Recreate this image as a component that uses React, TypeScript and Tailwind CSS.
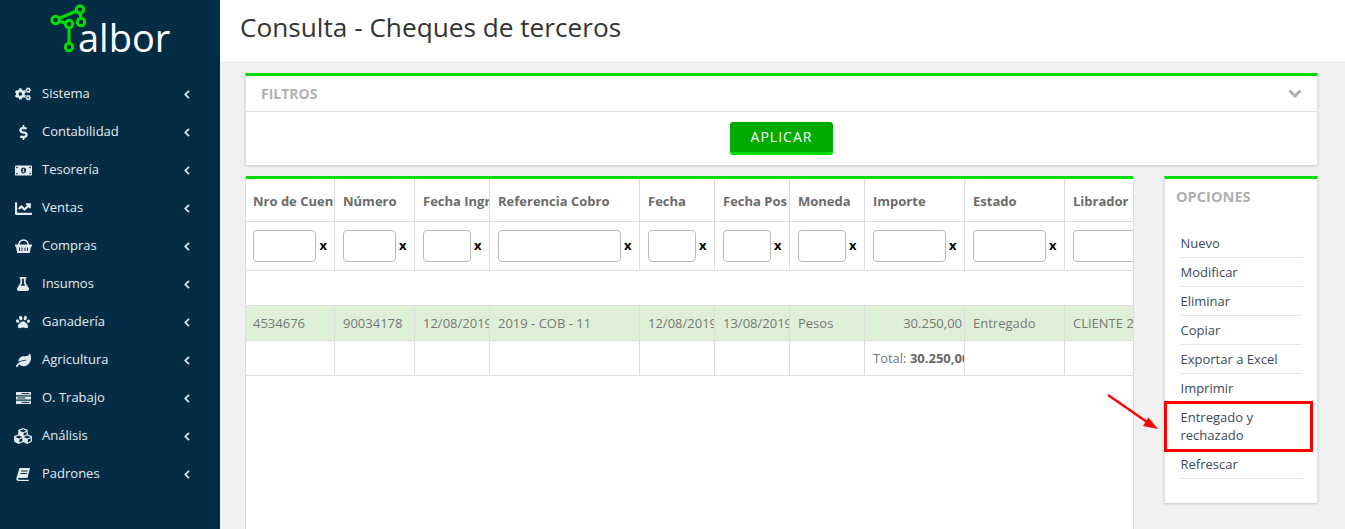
import { FaChartLine, FaCogs, FaCubes, FaDollarSign, FaFlask, FaLeaf, FaMoneyBillAlt, FaPaw } from 'react-icons/fa'

function BasketIcon() {
  return (
    <svg width="17" height="14" viewBox="0 0 17 14">
      <path d="M3.5 6.5C4 2.5 6 1 8.5 1s4.500 1.500 5 5.500" fill="none" stroke="currentColor" strokeWidth="1.5" />
      <path d="M0 5.500h17v2h-1L14.800 14H2.200L1 7.500H0Z" fill="currentColor" />
      <path d="M4.500 8.500v3.500M7 8.500v3.500M10 8.500v3.500M12.500 8.500v3.500" stroke="#052c45" strokeWidth="1" />
    </svg>
  )
}

function BarsIcon() {
  return (
    <svg width="15" height="12" viewBox="0 0 15 12">
      <path d="M0 0h15v3.200H0ZM0 4.400h15v3.200H0ZM0 8.800h15V12H0Z" fill="currentColor" />
      <path d="M5.500 1.600h8M1.500 6h8M5.500 10.400h8" stroke="#052c45" strokeWidth="1" />
    </svg>
  )
}

function BookIcon() {
  return (
    <svg width="14" height="13" viewBox="0 0 14 13">
      <path d="M3.500 0H14L11.500 10H2.800C2.300 10 2 10.500 2.200 11s.6.700 1 .700h9.800L12.500 13H2.500C1 13 0 12 .4 10.300Z" fill="currentColor" />
      <path d="M5 3h6.500M4.500 5.500H11" stroke="#052c45" strokeWidth="1" />
    </svg>
  )
}

const menu = [
  { label: 'Sistema', icon: <FaCogs className="text-[16px]" /> },
  { label: 'Contabilidad', icon: <FaDollarSign className="text-[15px]" /> },
  { label: 'Tesorería', icon: <FaMoneyBillAlt className="text-[17px]" /> },
  { label: 'Ventas', icon: <FaChartLine className="text-[17px]" /> },
  { label: 'Compras', icon: <BasketIcon /> },
  { label: 'Insumos', icon: <FaFlask className="text-[14px]" /> },
  { label: 'Ganadería', icon: <FaPaw className="text-[14px]" /> },
  { label: 'Agricultura', icon: <FaLeaf className="text-[15px]" /> },
  { label: 'O. Trabajo', icon: <BarsIcon /> },
  { label: 'Análisis', icon: <FaCubes className="text-[18px]" /> },
  { label: 'Padrones', icon: <BookIcon /> },
]

const columns = [
  { title: 'Nro de Cuenta', width: 'w-[88px]', input: 'w-[63px]' },
  { title: 'Número', width: 'w-[80px]', input: 'w-[53px]' },
  { title: 'Fecha Ingreso', width: 'w-[75px]', input: 'w-[48px]' },
  { title: 'Referencia Cobro', width: 'w-[150px]', input: 'w-[123px]' },
  { title: 'Fecha', width: 'w-[75px]', input: 'w-[48px]' },
  { title: 'Fecha Pos', width: 'w-[75px]', input: 'w-[48px]' },
  { title: 'Moneda', width: 'w-[75px]', input: 'w-[48px]' },
  { title: 'Importe', width: 'w-[100px]', input: 'w-[73px]' },
  { title: 'Estado', width: 'w-[100px]', input: 'w-[73px]' },
  { title: 'Librador', width: 'w-[100px]', input: 'w-[73px]' },
]

const row = ['4534676', '90034178', '12/08/2019', '2019 - COB - 11', '12/08/2019', '13/08/2019', 'Pesos', '30.250,00', 'Entregado', 'CLIENTE 2']

const options = ['Nuevo', 'Modificar', 'Eliminar', 'Copiar', 'Exportar a Excel', 'Imprimir', 'Entregado y rechazado', 'Refrescar']

function Logo() {
  return (
    <div className="flex h-[62px] items-start pl-[50px] pt-[2px]">
      <svg width="36" height="52" viewBox="50 2 36 52" fill="none" stroke="#00dd00" strokeWidth="3" className="shrink-0">
        <path d="M59 18.5 76.5 11M59 21l6 2M80 13l1 5M69 28v15" />
        <circle cx="80" cy="9.5" r="3.7" />
        <circle cx="55.5" cy="20" r="3.7" />
        <circle cx="69" cy="24" r="3.7" />
        <circle cx="81" cy="22" r="3.7" />
        <circle cx="69" cy="47" r="3.7" />
      </svg>
      <span className="ml-[-8px] mt-[9px] text-[38px] leading-[52px] text-white">albor</span>
    </div>
  )
}

export default function App() {
  return (
    <div className="flex h-[529px] w-[1345px] overflow-hidden bg-[#f1f1f1] font-['Open_Sans',sans-serif] text-[13px]">
      {/* Sidebar */}
      <aside className="w-[220px] shrink-0 bg-[#052c45] text-[#e4ecf1]">
        <Logo />
        <nav className="mt-[13px]">
          {menu.map((item) => (
            <div key={item.label} className="flex h-[38px] items-center">
              <span className="flex w-[42px] shrink-0 justify-center pl-[4px]">{item.icon}</span>
              <span className="flex-1">{item.label}</span>
              <svg className="mr-[30px]" width="6" height="9" viewBox="0 0 6 9" fill="none" stroke="currentColor" strokeWidth="1.7">
                <path d="M5 .8 1.300 4.500 5 8.200" />
              </svg>
            </div>
          ))}
        </nav>
      </aside>

      <div className="flex min-w-0 flex-1 flex-col">
        {/* Header */}
        <header className="flex h-[63px] shrink-0 items-center border-b border-[#e7e7e7] bg-white pb-[6px] pl-[20px]">
          <h1 className="text-[26.2px] text-[#333333]">Consulta - Cheques de terceros</h1>
        </header>

        <div className="flex-1 pl-[25px] pr-[27px] pt-[10px]">
          {/* Filtros */}
          <section className="h-[92px] border-x border-t-[3px] border-x-[#e3e3e3] border-t-[#00dd00] bg-white shadow-[0_1px_2px_rgba(0,0,0,0.18)]">
            <div className="flex h-[36px] items-center justify-between border-b border-[#dddddd] pl-[15px] pr-[15px]">
              <span className="text-[14px] font-bold text-[#b0b0b0]">FILTROS</span>
              <svg width="14" height="9" viewBox="0 0 14 9" fill="none" stroke="#b0b0b0" strokeWidth="3">
                <path d="M1.500 1.500 7 7l5.500-5.500" />
              </svg>
            </div>
            <div className="flex justify-center pt-[10px]">
              <button className="h-[33px] w-[103px] rounded-[3px] border-b-[3px] border-[#00dd00] bg-[#00ab00] pb-[2px] text-[14px] tracking-[1px] text-white">APLICAR</button>
            </div>
          </section>

          <div className="mt-[11px] flex gap-[30px]">
            {/* Tabla */}
            <section className="h-[400px] w-[889px] shrink-0 overflow-hidden rounded-t-[2px] border-x border-t-[3px] border-x-[#dddddd] border-t-[#00dd00] bg-white">
              <table className="w-[918px] table-fixed border-collapse text-left">
                <colgroup>
                  {columns.map((c) => (
                    <col key={c.title} className={c.width} />
                  ))}
                </colgroup>
                <thead>
                  <tr className="h-[42px]">
                    {columns.map((c) => (
                      <th key={c.title} className="overflow-hidden whitespace-nowrap border border-t-0 border-[#dddddd] pl-[8.5px] pt-[3px] font-bold text-[#6b6b6b] first:border-l-0 first:pl-[7px]">{c.title}</th>
                    ))}
                  </tr>
                  <tr className="h-[49px]">
                    {columns.map((c) => (
                      <td key={c.title} className="overflow-hidden border border-[#dddddd] pl-[8px] first:border-l-0 first:pl-[7px]">
                        <div className="flex items-center gap-[3.5px]">
                          <input className={`h-[32px] shrink-0 rounded-[4px] border border-[#bbbbbb] bg-white ${c.input}`} />
                          <span className="font-bold leading-none text-black">x</span>
                        </div>
                      </td>
                    ))}
                  </tr>
                </thead>
                <tbody className="text-[#777777]">
                  <tr className="h-[35px]">
                    {columns.map((c) => (
                      <td key={c.title} className="border-x-0 border-y border-[#dddddd]" />
                    ))}
                  </tr>
                  <tr className="h-[35px] bg-[#dff0d8]">
                    {row.map((value, i) => (
                      <td key={value + i} className={`overflow-hidden whitespace-nowrap border border-[#dddddd] pt-[2px] first:border-l-0 first:pl-[7px] ${i === 7 ? 'pr-[1.500px] text-right' : 'pl-[8.5px]'}`}>{value}</td>
                    ))}
                  </tr>
                  <tr className="h-[35px]">
                    {columns.map((c, i) => (
                      <td key={c.title} className="overflow-hidden whitespace-nowrap border border-[#dddddd] pl-[8.5px] pt-[2px] first:border-l-0 first:pl-[7px]">
                        {i === 7 && (
                          <>
                            Total: <b className="text-[#666666]">30.250,00</b>
                          </>
                        )}
                      </td>
                    ))}
                  </tr>
                </tbody>
              </table>
            </section>

            {/* Opciones */}
            <aside className="relative h-[327px] w-[154px] shrink-0 self-start border-x border-t-[3px] border-x-[#e3e3e3] border-t-[#00dd00] bg-white pl-[15px] pr-[15px] shadow-[0_1px_2px_rgba(0,0,0,0.18)]">
              <h2 className="ml-[-4px] mt-[8px] text-[14.6px] font-bold leading-[19px] text-[#b0b0b0]">OPCIONES</h2>
              <ul className="mt-[23px]">
                {options.map((option) => (
                  <li key={option} className="border-b border-[#e5e5e5] py-[5px] pl-[0.5px] leading-[18px] text-[#3c4a5a]">{option}</li>
                ))}
              </ul>
              {/* Resaltado */}
              <div className="absolute left-[-1px] top-[222px] h-[51px] w-[149px] border-[3px] border-[#ff0000]" />
              <svg className="absolute left-[-59px] top-[214px]" width="54" height="42" viewBox="1106 392 54 42">
                <path d="M1108 394 1147 421" stroke="#ff0000" strokeWidth="2.4" />
                <path d="M1158 428 1143 425 1148.500 416.500Z" fill="#ff0000" />
              </svg>
            </aside>
          </div>
        </div>
      </div>
    </div>
  )
}
